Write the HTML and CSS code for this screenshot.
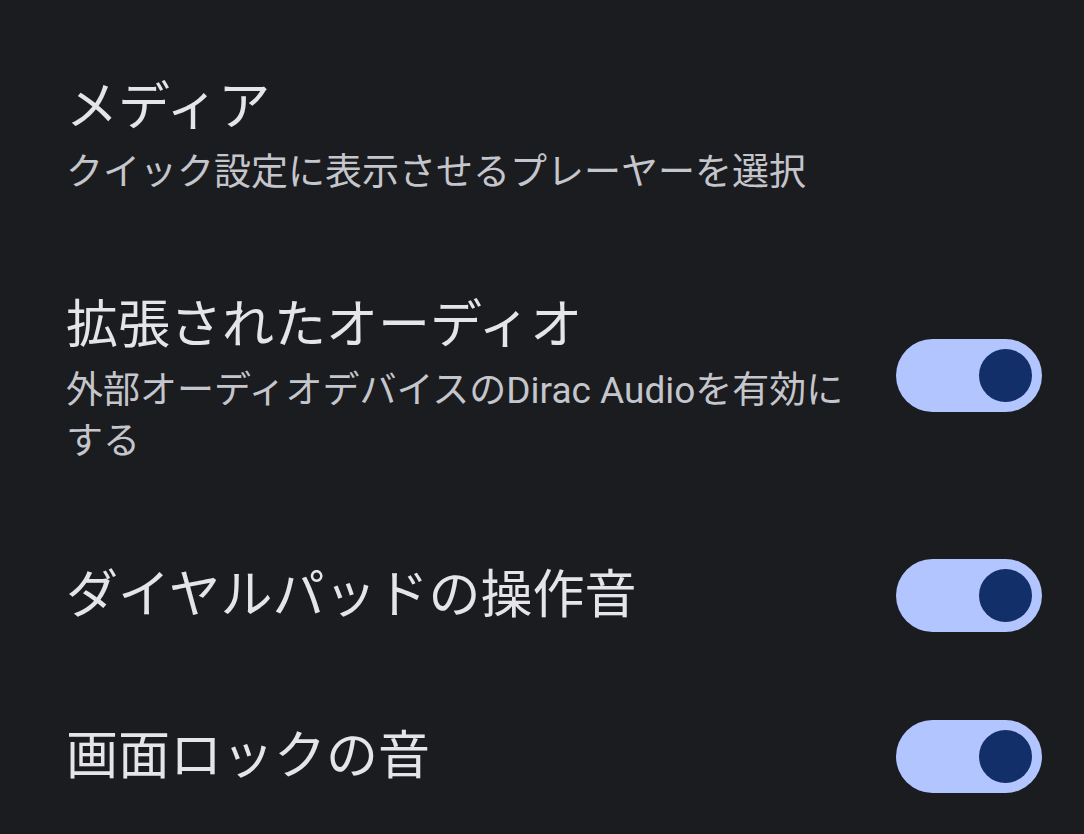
FILE: index.html
```html
<!DOCTYPE html>
<html lang="ja">
<head>
    <meta charset="UTF-8">
    <meta name="viewport" content="width=device-width, initial-scale=1.0">
    <title>サウンド設定</title>
    <link rel="stylesheet" href="styles.css">
</head>
<body>
    <div class="settings">
        <div class="row">
            <div class="text">
                <div class="title">メディア</div>
                <div class="summary">クイック設定に表示させるプレーヤーを選択</div>
            </div>
        </div>
        <div class="row with-summary">
            <div class="text">
                <div class="title">拡張されたオーディオ</div>
                <div class="summary">外部オーディオデバイスのDirac Audioを有効にする</div>
            </div>
            <div class="switch"><div class="knob"></div></div>
        </div>
        <div class="row single">
            <div class="text">
                <div class="title">ダイヤルパッドの操作音</div>
            </div>
            <div class="switch"><div class="knob"></div></div>
        </div>
        <div class="row single">
            <div class="text">
                <div class="title">画面ロックの音</div>
            </div>
            <div class="switch"><div class="knob"></div></div>
        </div>
    </div>
</body>
</html>
```

FILE: styles.css
```css
body {
    margin: 0;
    background-color: #1b1c20;
    font-family: Roboto, "Noto Sans CJK JP", sans-serif;
    height: 834px;
    overflow: hidden;
}
.settings {
    padding: 28px 42px 0 66px;
}
.row {
    display: flex;
    align-items: center;
    justify-content: space-between;
    padding: 48px 0;
}
.row.single {
    padding: 44px 0;
}
.text {
    width: 800px;
}
.title {
    color: #e4e4e9;
    font-size: 52px;
    line-height: 64px;
}
.summary {
    color: #c4c6cc;
    font-size: 37px;
    line-height: 51px;
    margin-top: 7px;
}
.switch {
    width: 146px;
    height: 73px;
    border-radius: 37px;
    background-color: #b2c5ff;
    display: flex;
    align-items: center;
    justify-content: flex-end;
    padding-right: 10px;
    box-sizing: border-box;
    flex-shrink: 0;
}
.with-summary .switch {
    margin-bottom: 10px;
}
.knob {
    width: 53px;
    height: 53px;
    border-radius: 50%;
    background-color: #122f69;
}
```
